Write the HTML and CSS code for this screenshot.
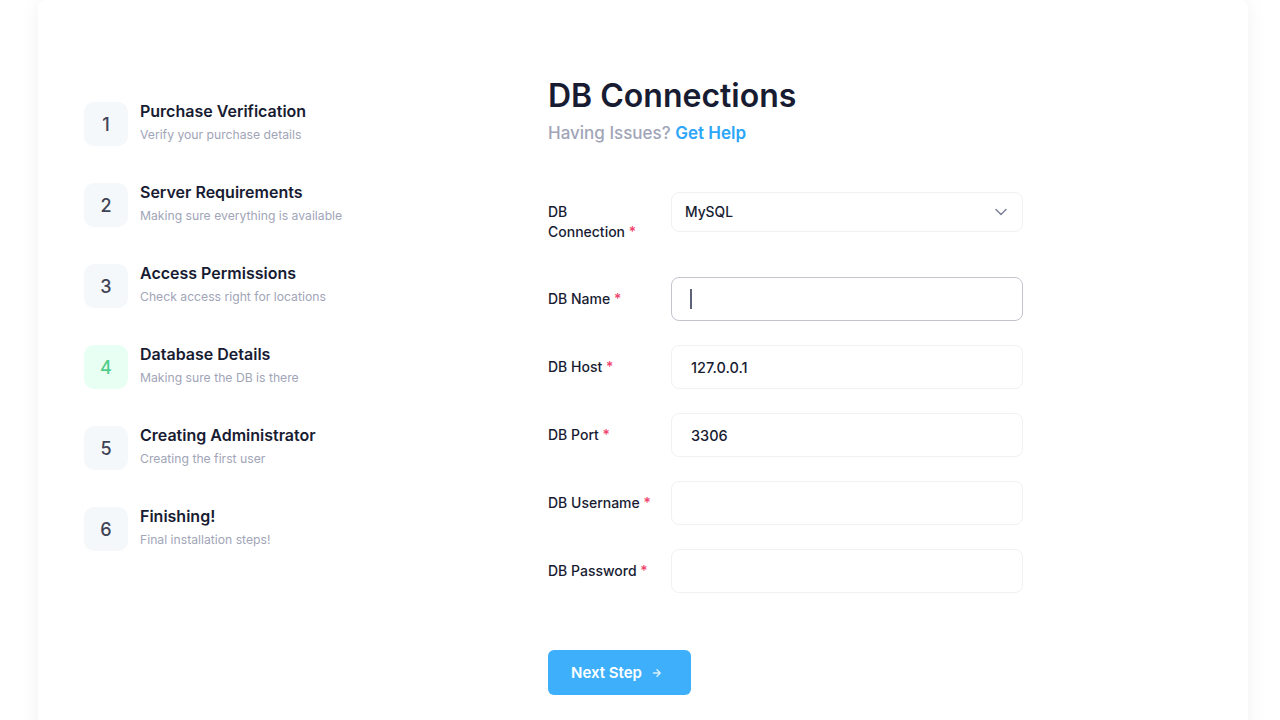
FILE: index.html
```html
<!DOCTYPE html>
<html lang="en">
<head>
<meta charset="utf-8">
<title>DB Connections</title>
<link rel="stylesheet" href="styles.css">
</head>
<body>
<div class="card">
  <aside class="steps">
    <div class="step">
      <div class="step-num">1</div>
      <div class="step-text">
        <div class="step-title">Purchase Verification</div>
        <div class="step-desc">Verify your purchase details</div>
      </div>
    </div>
    <div class="step">
      <div class="step-num">2</div>
      <div class="step-text">
        <div class="step-title">Server Requirements</div>
        <div class="step-desc">Making sure everything is available</div>
      </div>
    </div>
    <div class="step">
      <div class="step-num">3</div>
      <div class="step-text">
        <div class="step-title">Access Permissions</div>
        <div class="step-desc">Check access right for locations</div>
      </div>
    </div>
    <div class="step active">
      <div class="step-num">4</div>
      <div class="step-text">
        <div class="step-title">Database Details</div>
        <div class="step-desc">Making sure the DB is there</div>
      </div>
    </div>
    <div class="step">
      <div class="step-num">5</div>
      <div class="step-text">
        <div class="step-title">Creating Administrator</div>
        <div class="step-desc">Creating the first user</div>
      </div>
    </div>
    <div class="step">
      <div class="step-num">6</div>
      <div class="step-text">
        <div class="step-title">Finishing!</div>
        <div class="step-desc">Final installation steps!</div>
      </div>
    </div>
  </aside>

  <main class="content">
    <h1 class="title">DB Connections</h1>
    <p class="subtitle">Having Issues? <a class="help" href="#">Get Help</a></p>

    <form class="form">
      <div class="row">
        <label class="label label-sm"><span class="label-wrap">DB Connection <span class="req">*</span></span></label>
        <div class="select">
          <span>MySQL</span>
          <svg class="chev" width="12" height="8" viewBox="0 0 12 8" fill="none"><path d="M1 1.5l5 5 5-5" stroke="#7e8299" stroke-width="1.5" stroke-linecap="round" stroke-linejoin="round"/></svg>
        </div>
      </div>
      <div class="row">
        <label class="label">DB Name <span class="req">*</span></label>
        <div class="field focus"><span class="caret"></span></div>
      </div>
      <div class="row">
        <label class="label">DB Host <span class="req">*</span></label>
        <div class="field">127.0.0.1</div>
      </div>
      <div class="row">
        <label class="label">DB Port <span class="req">*</span></label>
        <div class="field">3306</div>
      </div>
      <div class="row">
        <label class="label">DB Username <span class="req">*</span></label>
        <div class="field"></div>
      </div>
      <div class="row">
        <label class="label">DB Password <span class="req">*</span></label>
        <div class="field"></div>
      </div>
      <button type="button" class="btn">Next Step
        <svg width="10" height="10" viewBox="0 0 10 10" fill="none"><path d="M1.5 5h6.5M5 1.8L8.2 5 5 8.2" stroke="rgba(255,255,255,0.8)" stroke-width="1.5" stroke-linecap="round" stroke-linejoin="round"/></svg>
      </button>
    </form>
  </main>
</div>
</body>
</html>
```

FILE: styles.css
```css
* { box-sizing: border-box; }
html, body { margin: 0; padding: 0; background: #ffffff; }
body {
  font-family: "Inter", "Noto Sans", sans-serif;
  color: #181c32;
  height: 720px;
  overflow: hidden;
  padding: 0 32px 0 38px;
}
.card {
  width: 1210px;
  height: 760px;
  background: #ffffff;
  border-radius: 8px;
  box-shadow: 0 0 20px rgba(0, 0, 0, 0.06);
  display: flex;
  padding: 102px 0 0 46px;
}
.steps {
  width: 464px;
  display: flex;
  flex-direction: column;
  gap: 37px;
}
.step { display: flex; align-items: flex-start; gap: 12px; }
.step-num {
  width: 44px; height: 44px;
  border-radius: 10px;
  background: #f5f8fa;
  color: #3f4254;
  display: flex; align-items: center; justify-content: center;
  font-size: 18px; font-weight: 500;
}
.step.active .step-num { background: #e8fff3; color: #50cd89; }
.step-text { display: flex; flex-direction: column; }
.step-title {
  font-size: 16px; font-weight: 600; line-height: 20px;
  color: #181c32; letter-spacing: 0;
  margin-top: -1px;
}
.step-desc {
  font-size: 12.2px; line-height: 16px; margin-top: 6px;
  color: #a1a5b7;
}
.content { margin-top: -26px; }
.title {
  margin: 0;
  font-size: 32px; font-weight: 600; line-height: 40px;
  color: #181c32; letter-spacing: 0;
}
.subtitle {
  margin: 5px 0 0;
  font-size: 17px; font-weight: 500; line-height: 24px;
  color: #a1a5b7;
}
.help { color: #2ba6f8; font-weight: 600; text-decoration: none; }
.form { margin-top: 47px; width: 476px; }
.row { display: flex; align-items: flex-start; margin-bottom: 24px; }
.row:first-child { margin-bottom: 35px; }
.label {
  width: 123px; flex: none;
  font-size: 14px; font-weight: 500; line-height: 20px;
  color: #181c32; padding-top: 12px;
  white-space: nowrap;
}
.label-sm { padding-top: 10px; white-space: normal; }
.label-wrap { display: block; width: 92px; }
.req { color: #f1416c; }
.select {
  width: 352px; height: 40px;
  border: 1px solid #eff2f5; border-radius: 8px;
  display: flex; align-items: center; justify-content: space-between;
  padding: 0 15px 0 13px;
  font-size: 13.8px; font-weight: 500; color: #181c32;
}
.field {
  position: relative;
  width: 352px; height: 44px;
  border: 1px solid #eff2f5; border-radius: 8px;
  display: flex; align-items: center;
  padding: 0 19px;
  font-size: 14.5px; font-weight: 500; color: #181c32;
}
.field.focus { border-color: #c4c4cf; }
.caret {
  position: absolute; left: 18px; top: 11px;
  width: 2px; height: 20px; background: #5e6278;
}
.btn {
  margin-top: 57px;
  width: 143px; height: 45px;
  border: 0; border-radius: 6px;
  background: #3eaffb;
  color: #ffffff;
  font-family: inherit; font-size: 15px; font-weight: 600;
  display: flex; align-items: center; justify-content: center; gap: 10px;
  padding: 0 6px 0 0;
}
```
